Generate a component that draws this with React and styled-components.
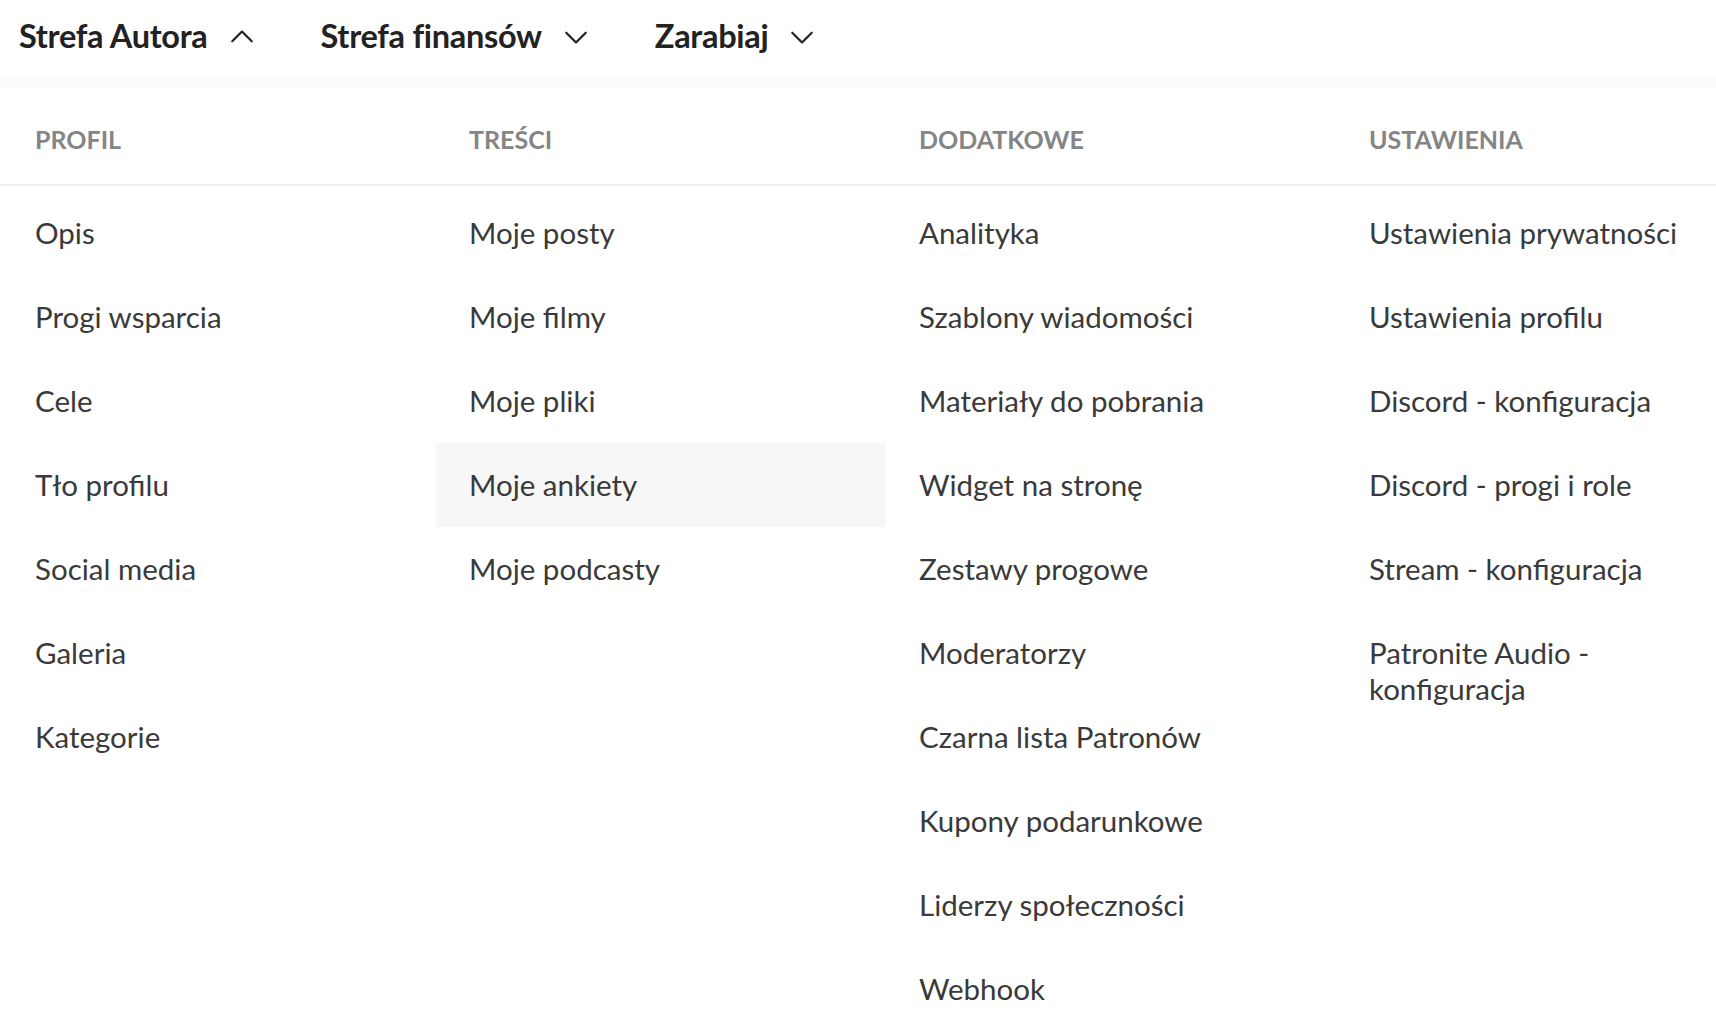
import React from 'react';
import styled, { createGlobalStyle } from 'styled-components';

const GlobalStyle = createGlobalStyle`
  html, body {
    margin: 0;
    padding: 0;
    background: #fff;
    font-family: Lato, "Open Sans", "Noto Sans", sans-serif;
  }
`;

const columns = [
  {
    title: 'Profil',
    items: ['Opis', 'Progi wsparcia', 'Cele', 'Tło profilu', 'Social media', 'Galeria', 'Kategorie'],
  },
  {
    title: 'Treści',
    items: ['Moje posty', 'Moje filmy', 'Moje pliki', 'Moje ankiety', 'Moje podcasty'],
    active: 'Moje ankiety',
  },
  {
    title: 'Dodatkowe',
    items: [
      'Analityka',
      'Szablony wiadomości',
      'Materiały do pobrania',
      'Widget na stronę',
      'Zestawy progowe',
      'Moderatorzy',
      'Czarna lista Patronów',
      'Kupony podarunkowe',
      'Liderzy społeczności',
      'Webhook',
    ],
  },
  {
    title: 'Ustawienia',
    items: [
      'Ustawienia prywatności',
      'Ustawienia profilu',
      'Discord - konfiguracja',
      'Discord - progi i role',
      'Stream - konfiguracja',
      'Patronite Audio - konfiguracja',
    ],
  },
];

const Chevron = ({ up }) => (
  <svg width="26" height="26" viewBox="0 0 24 24" fill="none" stroke="#222" strokeWidth="2" strokeLinecap="round" strokeLinejoin="round">
    {up ? <path d="M3 16l9-9 9 9" /> : <path d="M3 8l9 9 9-9" />}
  </svg>
);

export default function App() {
  return (
    <>
      <GlobalStyle />
      <Page>
        <NavBar>
          <NavItem>Strefa Autora <Chevron up /></NavItem>
          <NavItem>Strefa finansów <Chevron /></NavItem>
          <NavItem>Zarabiaj <Chevron /></NavItem>
        </NavBar>
        <Shade />
        <Menu>
          <HeaderRow>
            {columns.map((c) => (
              <Heading key={c.title}>{c.title}</Heading>
            ))}
          </HeaderRow>
          <Body>
            {columns.map((c) => (
              <Column key={c.title}>
                {c.items.map((it) => (
                  <Item key={it} $active={c.active === it}>{it}</Item>
                ))}
              </Column>
            ))}
          </Body>
        </Menu>
      </Page>
    </>
  );
}

const Page = styled.div`
  width: 1716px;
  min-height: 1026px;
  background: #fff;
`;

const NavBar = styled.nav`
  height: 71px;
  padding: 0 19px 8px;
  display: flex;
  align-items: center;
  gap: 66px;
`;

const NavItem = styled.div`
  display: flex;
  align-items: center;
  gap: 21px;
  font-size: 32.5px;
  font-weight: 700;
  color: #222;
  letter-spacing: -0.3px;
  svg {
    margin-top: 2px;
  }
`;

const Shade = styled.div`
  height: 10px;
  background: linear-gradient(to bottom, #fafafa, #fdfdfd);
`;

const grid = `
  display: grid;
  grid-template-columns: 434px 450px 450px 1fr;
  padding-left: 2px;
`;

const Menu = styled.div`
  display: flex;
  flex-direction: column;
`;

const HeaderRow = styled.div`
  ${grid}
  height: 95px;
  align-items: center;
  border-bottom: 2px solid #f0f0f0;
`;

const Heading = styled.div`
  padding-left: 33px;
  padding-top: 4px;
  font-size: 25px;
  font-weight: 700;
  color: #858585;
  text-transform: uppercase;
`;

const Body = styled.div`
  ${grid}
  padding-top: 5px;
`;

const Column = styled.div`
  display: flex;
  flex-direction: column;
`;

const Item = styled.div`
  padding: 24px 30px 24px 33px;
  font-size: 29.5px;
  line-height: 36px;
  color: #3a3a3a;
  background: ${(p) => (p.$active ? '#f7f7f7' : 'transparent')};
`;
